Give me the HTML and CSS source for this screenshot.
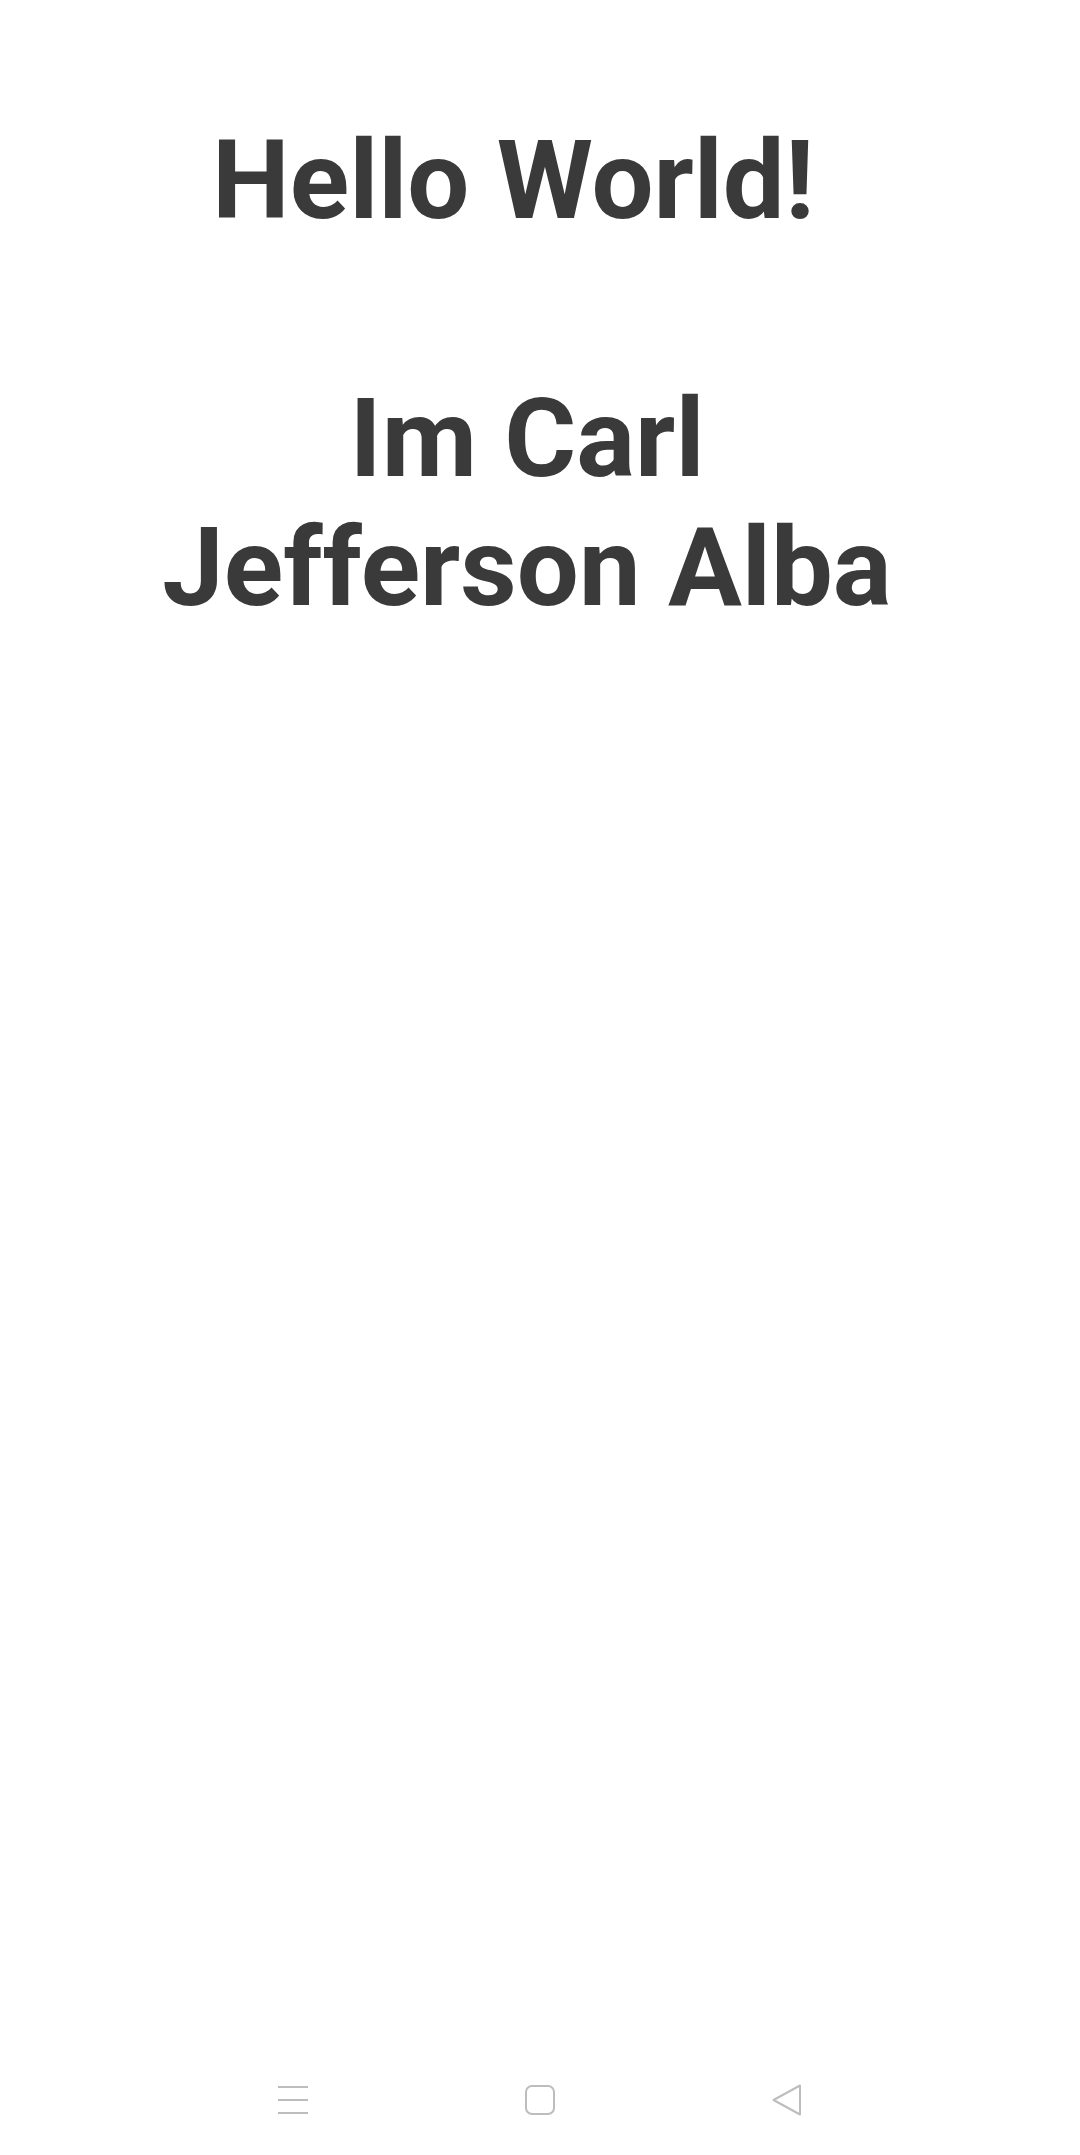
FILE: index.html
```html
<!DOCTYPE html>
<html>
<head>
<meta charset="utf-8">
<link rel="stylesheet" href="styles.css">
</head>
<body>
<div class="screen">
  <main class="content">
    <h1 class="greeting">Hello World!&nbsp;<br><br>Im Carl Jefferson Alba</h1>
  </main>
  <nav class="navbar">
    <svg class="nav-icon" width="30" height="32" viewBox="0 0 30 32">
      <g stroke="#bdbdbd" stroke-width="2" fill="none">
        <line x1="0" y1="3" x2="30" y2="3"/>
        <line x1="0" y1="16" x2="30" y2="16"/>
        <line x1="0" y1="29" x2="30" y2="29"/>
      </g>
    </svg>
    <svg class="nav-icon" width="30" height="32" viewBox="0 0 30 32">
      <rect x="1" y="2" width="28" height="28" rx="6" ry="6" stroke="#bdbdbd" stroke-width="2" fill="none"/>
    </svg>
    <svg class="nav-icon" width="30" height="32" viewBox="0 0 30 32">
      <path d="M28 1.5 L1.5 16 L28 30.5 Z" stroke="#bdbdbd" stroke-width="2" stroke-linejoin="round" fill="none"/>
    </svg>
  </nav>
</div>
</body>
</html>
```

FILE: styles.css
```css
html, body {
  margin: 0;
  padding: 0;
  background: #ffffff;
}

.screen {
  width: 1080px;
  height: 2155px;
  display: flex;
  flex-direction: column;
}

.content {
  flex: 1;
  padding-top: 116px;
  padding-left: 137px;
}

.greeting {
  margin: 0;
  width: 780px;
  text-align: center;
  font-family: Roboto, "Liberation Sans", sans-serif;
  font-weight: 700;
  font-size: 110px;
  line-height: 129px;
  color: #3a3a3a;
}

.navbar {
  height: 110px;
  display: flex;
  align-items: center;
  justify-content: center;
  gap: 217px;
}

.nav-icon {
  display: block;
}
```
